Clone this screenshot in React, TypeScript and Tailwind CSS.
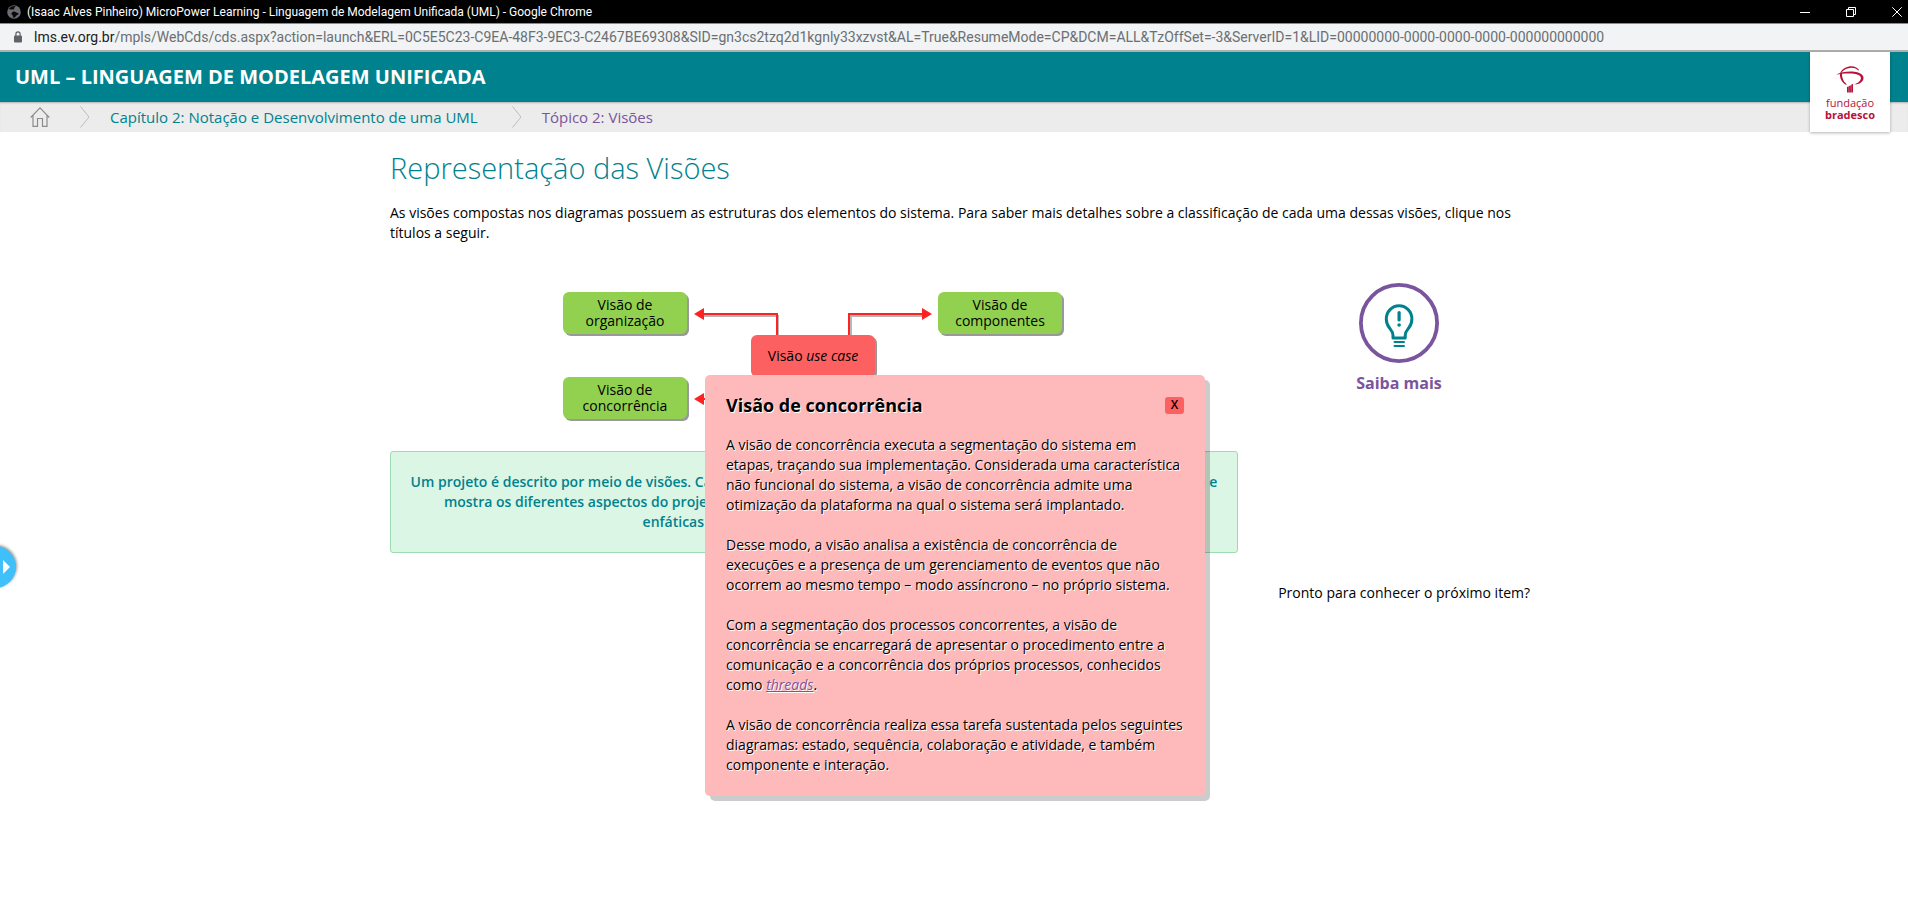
import React from "react";

const NODE =
  "absolute flex h-[42px] w-[124px] items-center justify-center rounded-md bg-[#92d050] text-center text-sm leading-4 text-black shadow-[2px_2px_0_#999]";

function Chevron() {
  return (
    <svg className="h-6 w-3 shrink-0" viewBox="0 0 12 24" fill="none" stroke="#bdbdbd" aria-hidden="true">
      <path d="M1.5 1.5 L10 12 L1.5 22.5" />
    </svg>
  );
}

function TitleBar() {
  return (
    <div className="flex h-[23px] items-center overflow-hidden bg-black text-white">
      <svg className="ml-[7px] size-3.5 shrink-0" viewBox="0 0 14 14" aria-hidden="true">
        <circle cx="7" cy="7" r="6.8" fill="#6a6d71" />
        <path d="M1.5 4.5 C3 3.5 4.5 5 6.5 4.5 C8 4 6.5 2.5 8.5 1.5 L9 1.2 A6.2 6.2 0 0 0 1.5 4.5 Z" fill="#0a0a0a" />
        <path d="M6.5 6.5 C8.5 6 9 7.5 11 8 C12 8.3 11.5 10 9.8 10.2 C8.8 10.5 9 12 7.5 12.6 L5.5 12.5 C7 11 5 10 4.5 9 C4 8 5.5 7 6.5 6.5 Z" fill="#0a0a0a" />
      </svg>
      <span className="ml-1.5 flex-1 truncate font-[Roboto,'Noto_Sans',sans-serif] text-xs">
        (Isaac Alves Pinheiro) MicroPower Learning - Linguagem de Modelagem Unificada (UML) - Google Chrome
      </span>
      <div className="-mr-3 flex h-5 shrink-0">
        <button aria-label="Minimizar" className="flex w-[46px] items-center justify-center">
          <svg width="10" height="10" viewBox="0 0 10 10" stroke="#fff"><path d="M0 5.5 H10" /></svg>
        </button>
        <button aria-label="Restaurar" className="flex w-[46px] items-center justify-center">
          <svg width="10" height="10" viewBox="0 0 10 10" fill="none" stroke="#fff">
            <path d="M.5 2.5 H7.5 V9.5 H.5 Z M2.5 2.5 V.5 H9.5 V7.5 H7.5" />
          </svg>
        </button>
        <button aria-label="Fechar" className="flex w-[46px] items-center justify-center">
          <svg width="10" height="10" viewBox="0 0 10 10" stroke="#fff"><path d="M.3 .3 L9.7 9.7 M9.7 .3 L.3 9.7" /></svg>
        </button>
      </div>
    </div>
  );
}

function AddressBar() {
  return (
    <div className="flex h-[29px] items-center border-t border-b-2 border-t-[#8a8a8a] border-b-[#b0b0b0] bg-[#f1f3f4]">
      <svg className="ml-3 h-3 w-3 shrink-0" viewBox="0 0 12 12" aria-hidden="true">
        <rect x="2" y="4.5" width="8" height="7" rx="1" fill="#5f6368" />
        <path d="M3.9 5 V3 A2.1 2.1 0 0 1 8.1 3 V5" fill="none" stroke="#5f6368" strokeWidth="1.2" />
      </svg>
      <span className="ml-2.5 truncate font-[Roboto,'Noto_Sans',sans-serif] text-sm text-[#6b6f73]">
        <span className="text-[#202124]">lms.ev.org.br</span>
        /mpls/WebCds/cds.aspx?action=launch&amp;ERL=0C5E5C23-C9EA-48F3-9EC3-C2467BE69308&amp;SID=gn3cs2tzq2d1kgnly33xzvst&amp;AL=True&amp;ResumeMode=CP&amp;DCM=ALL&amp;TzOffSet=-3&amp;ServerID=1&amp;LID=00000000-0000-0000-0000-000000000000
      </span>
    </div>
  );
}

function Logo() {
  return (
    <a
      href="#fundacao"
      className="absolute top-0 right-[18px] flex size-20 flex-col items-center bg-white pt-3.5 text-center text-[11px] leading-3 text-[#b5123a] shadow-[0_1px_3px_rgba(0,0,0,0.3)]"
    >
      <svg width="28" height="27" viewBox="0 0 28 27" aria-hidden="true">
        <path d="M4.2 7 C6 2.5 11 .2 15.5 .2 C18.5 .2 21.5 1.6 23.2 4 L22.4 4.4 C20 2.2 17 1.6 14 1.9 C10 2.4 6.6 4.2 5.4 7 Z" fill="#b5123a" />
        <path d="M.3 8.6 C6 5.4 16 4.8 22 6.6 C26.5 8 28.6 11 27 14.2 C25.6 16.9 22.2 18.4 18 18.6 C22 17.2 24.9 14.8 24.9 12 C24.9 9.4 21.4 8 16 7.6 C10.5 7.2 5 7.8 .3 8.6 Z" fill="#b5123a" />
        <path d="M4 7.2 C3.4 12 6 16.6 10 18.8 L10.8 18.3 C7.6 15.6 5.8 12 6 7.4 Z" fill="#b5123a" />
        <path d="M11 26.5 V21 L12.8 20.3 V26.5 Z M13.1 26.5 V20 L14.9 19.2 V26.5 Z M15.2 26.5 V18.8 L17 17.8 V26.5 Z" fill="#b5123a" />
      </svg>
      <span className="mt-1">fundação</span>
      <strong className="font-bold">bradesco</strong>
    </a>
  );
}

function Diagram() {
  return (
    <div className="relative mx-auto h-[138px] w-[502px]">
      <svg className="absolute inset-0 h-full w-full" viewBox="0 0 502 138" aria-hidden="true">
        <g fill="none" stroke="#b8b8b8" strokeWidth="2">
          <path d="M141 24 H215 V44" />
          <path d="M288 44 V24 H360" />
        </g>
        <g fill="none" stroke="#ff2222" strokeWidth="2">
          <path d="M141 22 H214 V44" />
          <path d="M286 44 V22 H360" />
          <path d="M141 107 H215" />
          <path d="M286 107 H360" />
        </g>
        <g fill="#ff2222">
          <path d="M131 22 L141 16 V28 Z" />
          <path d="M369 22 L359 16 V28 Z" />
          <path d="M131 107 L141 101 V113 Z" />
        </g>
      </svg>
      <button className={`${NODE} top-0 left-0`}>Visão de<br />organização</button>
      <button className={`${NODE} top-0 left-[375px]`}>Visão de<br />componentes</button>
      <button className={`${NODE} top-[85px] left-0`}>Visão de<br />concorrência</button>
      <div className="absolute top-[43px] left-[188px] flex h-[42px] w-[124px] items-center justify-center rounded-md bg-[#fc6060] text-sm text-black shadow-[2px_2px_0_#999]">
        <span>Visão <em>use case</em></span>
      </div>
    </div>
  );
}

function Dialog() {
  return (
    <section
      role="dialog"
      aria-labelledby="dialog-title"
      className="w-[500px] rounded-[5px] bg-[#febaba] px-[21px] pt-[18px] pb-[21px] text-sm leading-5 text-black shadow-[5px_5px_0_rgba(0,0,0,0.2)] [text-shadow:1px_1px_0_#fff]"
    >
      <header className="mb-[18px] flex h-6 items-center justify-between">
        <h2 id="dialog-title" className="text-lg leading-6 font-bold">Visão de concorrência</h2>
        <button aria-label="Fechar janela" className="h-[17px] w-[19px] rounded-[3px] bg-[#fc6060] text-xs leading-4 font-semibold [text-shadow:none]">
          X
        </button>
      </header>
      <div className="flex flex-col gap-5">
        <p>
          A visão de concorrência executa a segmentação do sistema em etapas, traçando sua implementação. Considerada uma
          característica não funcional do sistema, a visão de concorrência admite uma otimização da plataforma na qual o
          sistema será implantado.
        </p>
        <p>
          Desse modo, a visão analisa a existência de concorrência de execuções e a presença de um gerenciamento de eventos
          que não ocorrem ao mesmo tempo – modo assíncrono – no próprio sistema.
        </p>
        <p>
          Com a segmentação dos processos concorrentes, a visão de concorrência se encarregará de apresentar o procedimento
          entre a comunicação e a concorrência dos próprios processos, conhecidos como{" "}
          <a href="#threads" className="text-[#7a559d] italic underline">threads</a>.
        </p>
        <p>
          A visão de concorrência realiza essa tarefa sustentada pelos seguintes diagramas: estado, sequência, colaboração e
          atividade, e também componente e interação.
        </p>
      </div>
    </section>
  );
}

export default function App() {
  return (
    <div className="min-h-screen overflow-x-hidden bg-white font-['Open_Sans','Noto_Sans',sans-serif] text-sm leading-5 text-black">
      <TitleBar />
      <AddressBar />

      <header className="relative z-10">
        <div className="flex h-[50px] items-center bg-[#00828e] px-[15px]">
          <h1 className="text-xl font-bold text-white">UML – LINGUAGEM DE MODELAGEM UNIFICADA</h1>
        </div>
        <nav className="flex h-[30px] items-center bg-[#ececec] text-[15px] shadow-[inset_0_2px_2px_-1px_rgba(0,0,0,0.25)]">
          <a href="#inicio" aria-label="Início" className="ml-[30px]">
            <svg width="20" height="20" viewBox="0 0 20 20" fill="none" stroke="#8c8c8c" strokeWidth="1.2" aria-hidden="true">
              <path d="M.7 10.5 L10 .9 L19.3 10.5 M3 8.5 V19.3 H7.5 V11.5 H12.5 V19.3 H17 V8.5" />
            </svg>
          </a>
          <span className="ml-[29px] flex"><Chevron /></span>
          <a href="#capitulo" className="ml-[19px] text-[#00828e]">Capítulo 2: Notação e Desenvolvimento de uma UML</a>
          <span className="ml-[33px] flex"><Chevron /></span>
          <a href="#topico" className="ml-[19px] text-[#7a559d]">Tópico 2: Visões</a>
        </nav>
        <Logo />
      </header>

      <main className="relative">
        <div className="mx-auto max-w-[1152px] pt-4 pl-3">
          <h2 className="text-[29px] leading-10 font-light text-[#00828e]">Representação das Visões</h2>
          <p className="mt-[15px]">
            As visões compostas nos diagramas possuem as estruturas dos elementos do sistema. Para saber mais detalhes sobre a
            classificação de cada uma dessas visões, clique nos títulos a seguir.
          </p>
          <div className="mt-10 grid grid-cols-[minmax(0,1fr)_262px] gap-[30px]">
            <div className="pt-[9px]">
              <Diagram />
              <div className="mt-[21px] rounded-[3px] border border-[#9ddcb3] bg-[#dcf6e5] py-5 text-center font-semibold text-[#00828e]">
                <p>
                  Um projeto é descrito por meio de visões. Cada visão é uma projeção da descrição completa do sistema que é unitária e
                  <br />
                  mostra os diferentes aspectos do projeto do sistema, ressaltando as características que são mais relevantes e
                  <br />
                  enfáticas para a compreensão do sistema descrito.
                </p>
              </div>
            </div>
            <aside className="flex flex-col items-center">
              <button className="flex flex-col items-center">
                <svg width="80" height="80" viewBox="0 0 80 80" fill="none" aria-hidden="true">
                  <circle cx="40" cy="40" r="38.1" stroke="#7a559d" strokeWidth="3.8" />
                  <path
                    d="M34 55 V52.5 C34 49 32.5 47.5 30.5 45 C28.3 42.3 27.3 39.6 27.3 36 A12.8 13.2 0 0 1 52.9 36 C52.9 39.6 51.9 42.3 49.7 45 C47.7 47.5 46.2 49 46.2 52.5 V55 Z"
                    stroke="#00828e"
                    strokeWidth="3"
                    strokeLinejoin="round"
                  />
                  <path d="M40.1 29.5 V37" stroke="#00828e" strokeWidth="3.2" strokeLinecap="round" />
                  <circle cx="40.1" cy="42" r="1.8" fill="#00828e" />
                  <path d="M35.5 59 H45 M35.5 63 H45" stroke="#00828e" strokeWidth="2" strokeLinecap="round" />
                </svg>
                <span className="mt-[10px] text-base leading-5 font-bold text-[#7a559d]">Saiba mais</span>
              </button>
              <p className="mt-[190px] self-end">Pronto para conhecer o próximo item?</p>
            </aside>
          </div>
        </div>

        <div className="absolute inset-x-0 top-[243px] flex justify-center pl-0.5">
          <Dialog />
        </div>

        <button
          aria-label="Abrir menu"
          className="absolute top-[414px] -left-[26px] flex size-[42px] items-center justify-end rounded-full bg-[#3fc0fb] pr-1.5 shadow-[1px_-1px_3px_rgba(0,0,0,0.4)]"
        >
          <svg width="7" height="14" viewBox="0 0 7 14" fill="#fff" aria-hidden="true"><path d="M0 0 L7 7 L0 14 Z" /></svg>
        </button>
      </main>
    </div>
  );
}
